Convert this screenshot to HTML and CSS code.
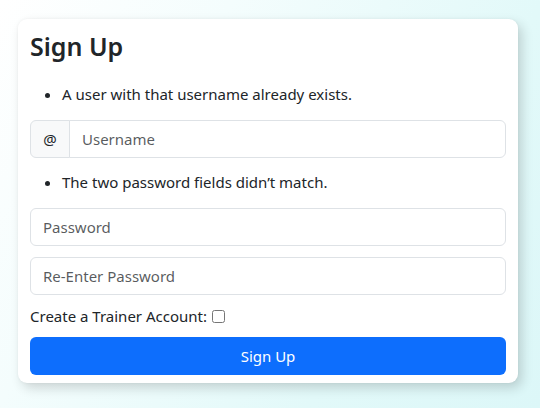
FILE: index.html
```html
<!DOCTYPE html>
<html>
<head>
<meta charset="utf-8">
<link rel="stylesheet" href="styles.css">
</head>
<body>
<div class="page">
  <form class="card">
    <h2 class="title">Sign Up</h2>
    <ul class="errors"><li>A user with that username already exists.</li></ul>
    <div class="input-group">
      <span class="addon">@</span>
      <input class="control grouped" type="text" placeholder="Username">
    </div>
    <ul class="errors"><li>The two password fields didn’t match.</li></ul>
    <input class="control field" type="password" placeholder="Password">
    <input class="control field last" type="password" placeholder="Re-Enter Password">
    <label class="check">Create a Trainer Account: <input type="checkbox" class="box"></label>
    <button type="button" class="btn">Sign Up</button>
  </form>
</div>
</body>
</html>
```
FILE: styles.css
```css
* { box-sizing: border-box; }
html, body { margin: 0; height: 100%; }
body {
  font-family: "Noto Sans", "Open Sans", sans-serif;
  font-size: 15px;
  line-height: 24px;
  color: #212529;
  background: linear-gradient(120deg, #ffffff 0%, #f4fdfd 30%, #e2f9f9 70%, #dcf7f8 100%);
}
.page { padding: 19px 22px 0 18px; }
.card {
  width: 500px;
  background: #fff;
  border-radius: 9px;
  padding: 12px 12px 8px;
  box-shadow: 4px 5px 12px rgba(0, 0, 0, 0.16), 0 0 3px rgba(0,0,0,0.05);
  display: flex;
  flex-direction: column;
}
.title {
  margin: 0 0 20px;
  font-size: 25px;
  font-weight: 600;
  line-height: 31px;
}
.errors {
  margin: 0 0 14px;
  padding-left: 32px;
}
.input-group {
  display: flex;
  height: 38px;
  margin-bottom: 12px;
}
.addon {
  width: 40px;
  display: flex;
  align-items: center;
  justify-content: center;
  background: #f8f9fa;
  border: 1px solid #dee2e6;
  border-radius: 6px 0 0 6px;
}
.control {
  font: inherit;
  color: #212529;
  height: 38px;
  padding: 6px 12px;
  border: 1px solid #dee2e6;
  border-radius: 6px;
  background: #fff;
  outline: none;
}
.control::placeholder { color: rgba(33, 37, 41, 0.75); }
.grouped {
  flex: 1;
  margin-left: -1px;
  border-radius: 0 6px 6px 0;
}
.field { width: 100%; margin-bottom: 11px; }
.field.last { margin-bottom: 9px; }
.check { margin-bottom: 9px; }
.box { margin: 0 0 0 1px; width: 13px; height: 13px; vertical-align: -1px; }
.btn {
  font: inherit;
  height: 38px;
  border: none;
  border-radius: 6px;
  background: #0d6efd;
  color: #fff;
}
```
